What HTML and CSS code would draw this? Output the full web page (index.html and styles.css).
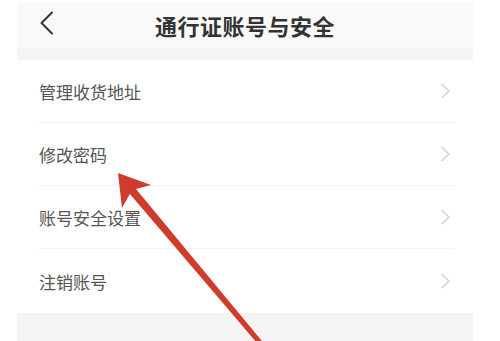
FILE: index.html
```html
<!DOCTYPE html>
<html lang="zh-CN">
<head>
<meta charset="utf-8">
<title>通行证账号与安全</title>
<link rel="stylesheet" href="styles.css">
</head>
<body>
<div class="page">
  <header class="header">
    <svg class="back" width="16" height="24" viewBox="0 0 16 24"><path d="M13 1.5 L2.5 12 L13 22.5" fill="none" stroke="#333" stroke-width="2" stroke-linecap="round" stroke-linejoin="round"/></svg>
    <h1 class="title">通行证账号与安全</h1>
  </header>
  <div class="strip"></div>
  <ul class="list">
    <li class="row"><span class="label">管理收货地址</span><svg class="chev" width="11" height="16" viewBox="0 0 11 16"><path d="M1.5 1 L9 8 L1.5 15" fill="none" stroke="#cfcfcf" stroke-width="1.3"/></svg></li>
    <li class="row"><span class="label">修改密码</span><svg class="chev" width="11" height="16" viewBox="0 0 11 16"><path d="M1.5 1 L9 8 L1.5 15" fill="none" stroke="#cfcfcf" stroke-width="1.3"/></svg></li>
    <li class="row"><span class="label">账号安全设置</span><svg class="chev" width="11" height="16" viewBox="0 0 11 16"><path d="M1.5 1 L9 8 L1.5 15" fill="none" stroke="#cfcfcf" stroke-width="1.3"/></svg></li>
    <li class="row"><span class="label">注销账号</span><svg class="chev" width="11" height="16" viewBox="0 0 11 16"><path d="M1.5 1 L9 8 L1.5 15" fill="none" stroke="#cfcfcf" stroke-width="1.3"/></svg></li>
  </ul>
  <div class="footer"></div>
</div>
<svg class="arrow" width="500" height="341" viewBox="0 0 500 341">
  <polygon points="133.1,185.4 126.9,190.6 260.1,346.6 263.9,343.4" fill="#cf3b2d"/>
  <polygon points="118,173 151,185 132,190 122,208" fill="#cf3b2d"/>
</svg>
</body>
</html>
```
FILE: styles.css
```css
html, body {
  margin: 0;
  padding: 0;
  background: #ffffff;
  width: 500px;
  height: 341px;
  overflow: hidden;
  font-family: "Noto Sans CJK SC", "Noto Sans", sans-serif;
}
.page {
  width: 456px;
  margin-left: 17px;
  padding-top: 2px;
}
.header {
  height: 46px;
  background: #f9f9f9;
  display: flex;
  align-items: center;
  justify-content: center;
  position: relative;
}
.back {
  position: absolute;
  left: 22px;
  top: 9px;
}
.title {
  margin: 0;
  font-size: 22px;
  font-weight: bold;
  color: #333333;
  letter-spacing: 0.5px;
  line-height: 1;
}
.strip {
  height: 12px;
  background: #f4f4f4;
}
.list {
  list-style: none;
  margin: 0;
  padding: 0;
  background: #ffffff;
}
.row {
  height: 62px;
  margin-left: 22px;
  margin-right: 18px;
  padding-right: 4px;
  border-bottom: 1px solid #f1f1f1;
  display: flex;
  align-items: center;
  justify-content: space-between;
}
.row:last-child {
  border-bottom: none;
  height: 64px;
}
.label {
  font-size: 17px;
  color: #555555;
  line-height: 1;
}
.chev {
  display: block;
}
.footer {
  height: 40px;
  background: #f4f4f4;
}
.arrow {
  position: absolute;
  left: 0;
  top: 0;
  pointer-events: none;
}
```
